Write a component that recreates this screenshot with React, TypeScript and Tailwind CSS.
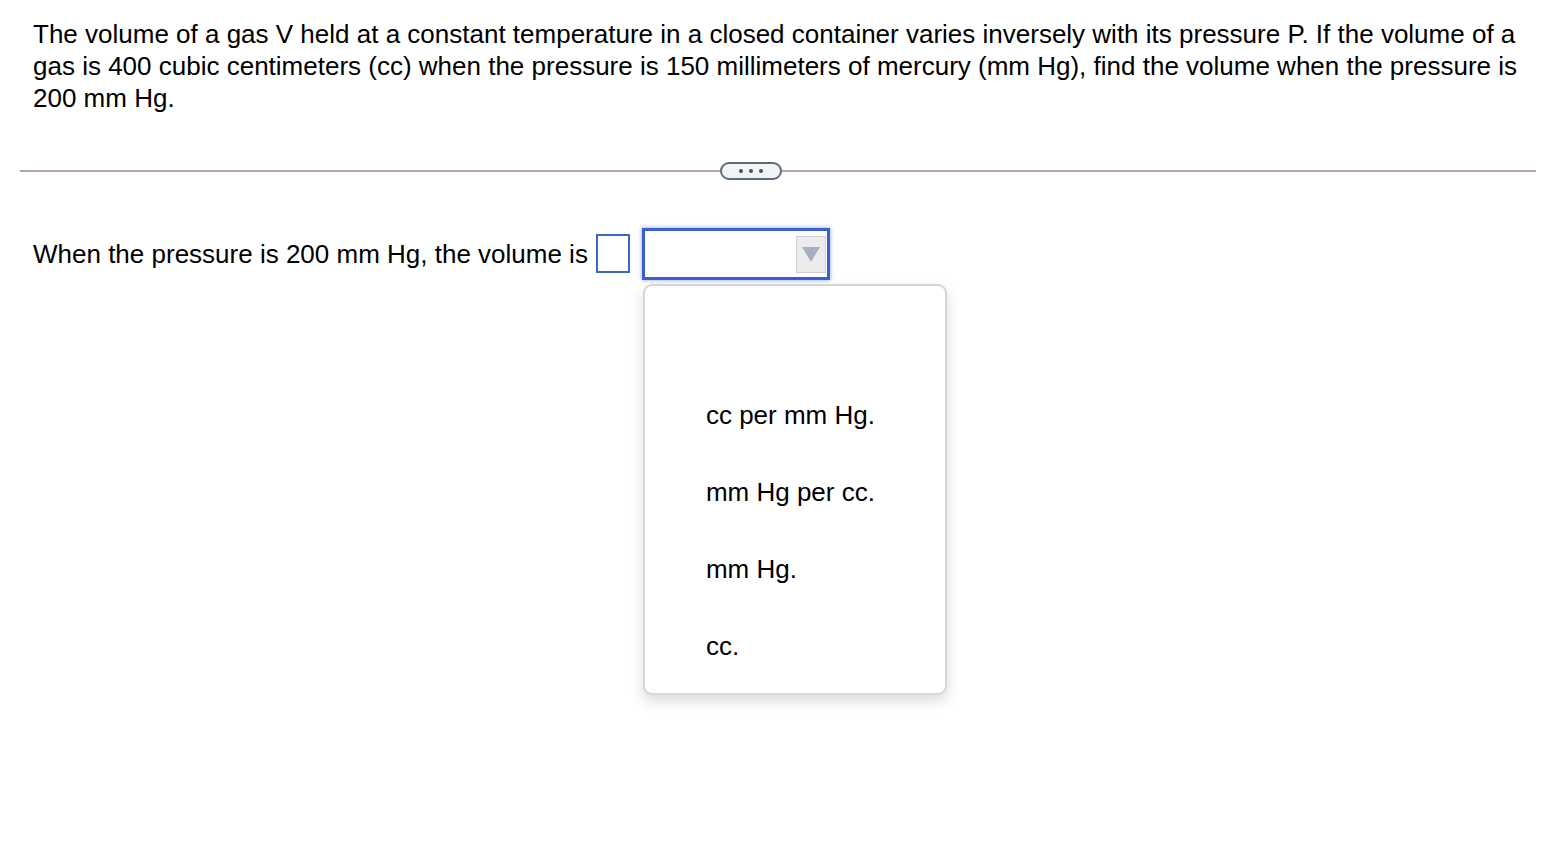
import React from 'react';

const options = ['cc per mm Hg.', 'mm Hg per cc.', 'mm Hg.', 'cc.'];

export default function App() {
    return (
        <div className="min-h-screen bg-white text-black" style={{ fontFamily: '"Liberation Sans", Arial, sans-serif' }}>
            <div className="px-[33px] pt-[18px] text-[26px] leading-[32px] whitespace-nowrap">
                The volume of a gas V held at a constant temperature in a closed container varies inversely with its pressure P. If the volume of a
                <br />
                gas is 400 cubic centimeters (cc) when the pressure is 150 millimeters of mercury (mm Hg), find the volume when the pressure is
                <br />
                200 mm Hg.
            </div>

            <div className="mt-[48px] ml-[20px] mr-[14px] flex items-center">
                <div className="h-[2px] flex-1 bg-[#b8a2ae]" />
                <div className="flex h-[18px] w-[62px] items-center justify-center gap-[6px] rounded-full border-2 border-[#5d6c78] bg-[#f1f3f6]">
                    <span className="h-[4px] w-[4px] rounded-full bg-[#4a4f55]" />
                    <span className="h-[4px] w-[4px] rounded-full bg-[#4a4f55]" />
                    <span className="h-[4px] w-[4px] rounded-full bg-[#4a4f55]" />
                </div>
                <div className="h-[2px] w-[754px] bg-[#b8a2ae]" />
            </div>

            <div className="mt-[48px] flex items-start pl-[33px]">
                <span className="mt-[10px] text-[26px] leading-[32px]">When the pressure is 200 mm Hg, the volume is</span>
                <div className="ml-[8px] mt-[6px] h-[39px] w-[34px] border-2 border-[#3f66c6] bg-white" />
                <div className="relative ml-[12px]">
                    <div className="flex h-[52px] w-[188px] items-center justify-end border-[3px] border-[#3a5fcf] bg-white pr-[1px] shadow-[0_0_4px_rgba(58,95,207,0.6)]">
                        <div className="flex h-[37px] w-[30px] items-center justify-center border border-[#cfcfcf] bg-[#ececec]">
                            <svg width="20" height="18" viewBox="0 0 20 18">
                                <polygon points="1,2 19,2 10,17" fill="#a7afc1" />
                            </svg>
                        </div>
                    </div>
                    <div className="absolute left-[1px] top-[56px] h-[411px] w-[304px] rounded-[9px] border-2 border-[#d6d6d6] bg-white pt-[90px] shadow-[0_6px_14px_rgba(0,0,0,0.15)]">
                        {options.map((o, i) => (
                            <div key={i} className="flex h-[77px] items-center pl-[61px] text-[26px] leading-[32px]">
                                {o}
                            </div>
                        ))}
                    </div>
                </div>
            </div>
        </div>
    );
}
